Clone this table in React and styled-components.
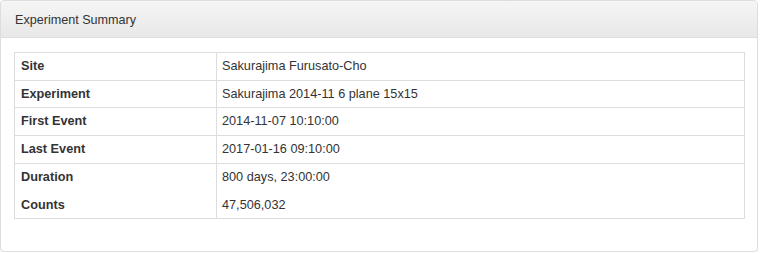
import React from "react";
import styled, { createGlobalStyle } from "styled-components";

const Global = createGlobalStyle`
  html, body { margin: 0; padding: 0; background: #fff; }
  body { font-family: "Liberation Sans", Arial, sans-serif; color: #333; }
`;

const Panel = styled.section`
  box-sizing: border-box;
  width: 758px;
  border: 1px solid #ddd;
  border-radius: 4px;
  background: #fff;
  box-shadow: 0 1px 1px rgba(0, 0, 0, 0.05);
`;

const Heading = styled.header`
  padding: 9px 14px 7px;
  font-size: 12.6px;
  line-height: 20px;
  color: #333;
  background: linear-gradient(to bottom, #f5f5f5 0%, #e8e8e8 100%);
  border-bottom: 1px solid #ddd;
  border-top-left-radius: 3px;
  border-top-right-radius: 3px;
`;

const Body = styled.div`
  padding: 14px 12px 12px 13px;
`;

const Table = styled.table`
  width: 731px;
  border-collapse: collapse;
  border: 1px solid #ddd;
  margin-bottom: 20px;
  font-size: 12.7px;
  line-height: 18.7px;
`;

const Row = styled.tr`
  border-top: ${(p) => (p.$noLine ? "none" : "1px solid #ddd")};
`;

const Label = styled.th`
  width: 189px;
  padding: ${(p) => (p.$noLine ? "5px" : "4px")} 6px 4px;
  text-align: left;
  font-weight: bold;
  border-right: 1px solid #ddd;
  color: #333;
`;

const Value = styled.td`
  padding: ${(p) => (p.$noLine ? "5px" : "4px")} 5px 4px;
  color: #333;
`;

const rows = [
  ["Site", "Sakurajima Furusato-Cho"],
  ["Experiment", "Sakurajima 2014-11 6 plane 15x15"],
  ["First Event", "2014-11-07 10:10:00"],
  ["Last Event", "2017-01-16 09:10:00"],
  ["Duration", "800 days, 23:00:00"],
  ["Counts", "47,506,032", true],
];

export default function App() {
  return (
    <>
      <Global />
      <Panel>
        <Heading>Experiment Summary</Heading>
        <Body>
          <Table>
            <tbody>
              {rows.map(([k, v, noLine]) => (
                <Row key={k} $noLine={noLine}>
                  <Label $noLine={noLine}>{k}</Label>
                  <Value $noLine={noLine}>{v}</Value>
                </Row>
              ))}
            </tbody>
          </Table>
        </Body>
      </Panel>
    </>
  );
}
